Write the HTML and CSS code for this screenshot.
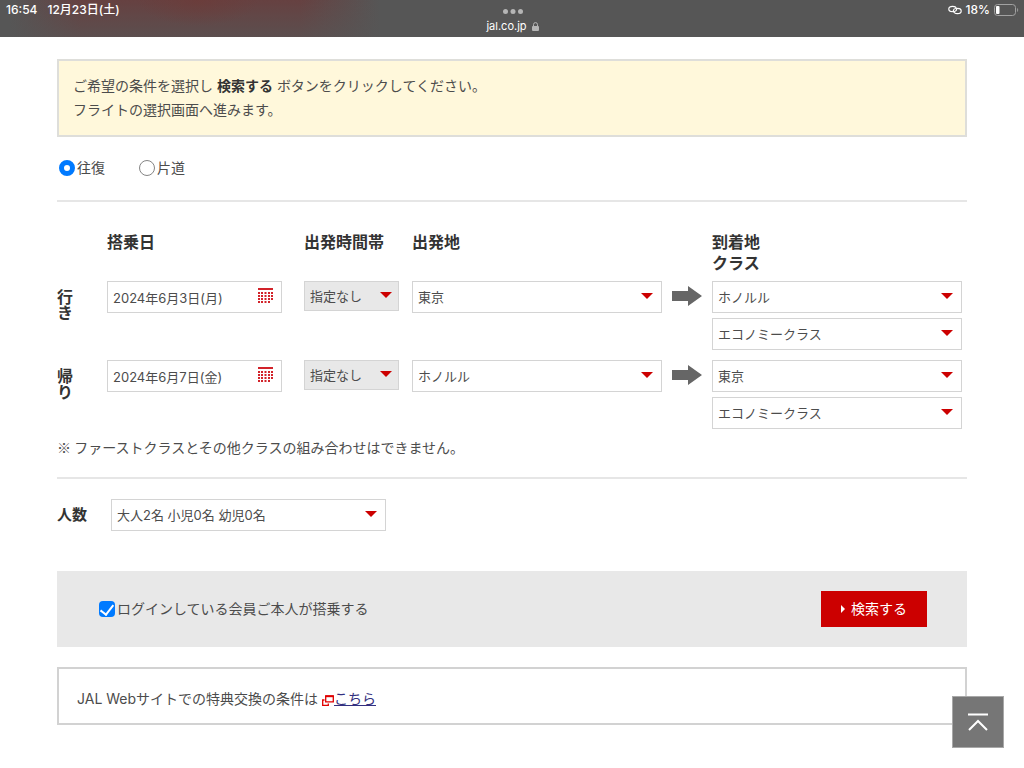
FILE: index.html
```html
<!DOCTYPE html>
<html lang="ja">
<head>
<meta charset="utf-8">
<meta name="viewport" content="width=device-width, initial-scale=1">
<title>JAL 特典航空券 検索</title>
<link rel="stylesheet" href="styles.css">
</head>
<body>
<header class="status">
  <div class="status-left"><span>16:54</span><span>12月23日(土)</span></div>
  <div class="status-center">
    <svg class="dots" viewBox="0 0 20 5" aria-hidden="true"><circle cx="2.5" cy="2.5" r="2.5"/><circle cx="10" cy="2.5" r="2.5"/><circle cx="17.5" cy="2.5" r="2.5"/></svg>
    <div class="address"><span>jal.co.jp</span>
      <svg class="lock" viewBox="0 0 7 9" aria-hidden="true"><path d="M1.5 4.5V2.6a2 2 0 0 1 4 0v1.9" fill="none" stroke="currentColor"/><rect y="4" width="7" height="5" rx="1" fill="currentColor"/></svg>
    </div>
  </div>
  <div class="status-right">
    <svg class="link-icon" viewBox="0 0 14 10" fill="none" stroke="currentColor" stroke-width="1.2" stroke-linecap="round" aria-hidden="true"><path d="M8.6 4.2C8.4 2.4 6.600 1.300 4.500 1.300 2.400 1.300.8 2.400.8 3.900c0 1.600 1.700 2.700 3.700 2.700"/><path d="M5.400 5.800c.2 1.800 2 2.900 4.100 2.900s3.700-1.100 3.700-2.600c0-1.600-1.700-2.700-3.700-2.700"/><path d="M8.600 4.200c0 1.200-.8 2-2 2.300M5.400 5.800c0-1.200.8-2 2-2.300"/></svg>
    <span>18%</span>
    <svg class="battery" viewBox="0 0 25 12" aria-hidden="true"><rect x=".5" y=".5" width="21" height="11" rx="3" fill="none" stroke="#a2a2a2"/><rect x="2" y="2" width="3.5" height="8" rx="1" fill="#fff"/><path d="M23.2 4v4c1.3-.6 1.3-3.4 0-4z" fill="#a2a2a2"/></svg>
  </div>
</header>

<main class="page">
  <p class="notice">ご希望の条件を選択し <strong>検索する</strong> ボタンをクリックしてください。<br>フライトの選択画面へ進みます。</p>

  <form>
    <div class="trip">
      <label class="choice"><input class="radio" type="radio" name="trip" checked>往復</label>
      <label class="choice"><input class="radio" type="radio" name="trip">片道</label>
    </div>

    <div class="flights">
      <span class="head head-date">搭乗日</span>
      <span class="head">出発時間帯</span>
      <span class="head head-from">出発地</span>
      <span class="head head-to">到着地<br>クラス</span>

      <span class="leg">行き</span>
      <div class="date"><input class="field" type="text" value="2024年6月3日(月)" aria-label="行き 搭乗日"><button class="calendar" type="button" aria-label="カレンダー"><svg viewBox="0 0 15 16" aria-hidden="true"><path d="M0 1h15" stroke-width="2"/><path d="M1 4v12M4 4v12M7.500 4v12M11 4v12M14 4v9" stroke-width="2" stroke-dasharray="2 1"/></svg></button></div>
      <div class="pick pick-time"><select class="field field-gray" aria-label="行き 出発時間帯"><option>指定なし</option></select></div>
      <div class="pick"><select class="field" aria-label="行き 出発地"><option>東京</option></select></div>
      <svg class="arrow" viewBox="0 0 30 20" aria-hidden="true"><path d="M0 5h16V0l14 10-14 10v-5H0z"/></svg>
      <div class="stack">
        <div class="pick"><select class="field" aria-label="行き 到着地"><option>ホノルル</option></select></div>
        <div class="pick"><select class="field" aria-label="行き クラス"><option>エコノミークラス</option></select></div>
      </div>

      <span class="leg">帰り</span>
      <div class="date"><input class="field" type="text" value="2024年6月7日(金)" aria-label="帰り 搭乗日"><button class="calendar" type="button" aria-label="カレンダー"><svg viewBox="0 0 15 16" aria-hidden="true"><path d="M0 1h15" stroke-width="2"/><path d="M1 4v12M4 4v12M7.500 4v12M11 4v12M14 4v9" stroke-width="2" stroke-dasharray="2 1"/></svg></button></div>
      <div class="pick pick-time"><select class="field field-gray" aria-label="帰り 出発時間帯"><option>指定なし</option></select></div>
      <div class="pick"><select class="field" aria-label="帰り 出発地"><option>ホノルル</option></select></div>
      <svg class="arrow" viewBox="0 0 30 20" aria-hidden="true"><path d="M0 5h16V0l14 10-14 10v-5H0z"/></svg>
      <div class="stack">
        <div class="pick"><select class="field" aria-label="帰り 到着地"><option>東京</option></select></div>
        <div class="pick"><select class="field" aria-label="帰り クラス"><option>エコノミークラス</option></select></div>
      </div>
    </div>
    <p class="remark">※ ファーストクラスとその他クラスの組み合わせはできません。</p>

    <div class="people">
      <label class="people-label" for="people">人数</label>
      <div class="pick pick-people"><select class="field" id="people"><option>大人2名 小児0名 幼児0名</option></select></div>
    </div>

    <div class="submit">
      <label class="choice"><input class="check" type="checkbox" checked>ログインしている会員ご本人が搭乗する</label>
      <button class="search" type="submit"><svg viewBox="0 0 4 8" aria-hidden="true"><path d="M0 0l4 4-4 4z" fill="#fff"/></svg>検索する</button>
    </div>
  </form>

  <p class="terms">JAL Webサイトでの特典交換の条件は <svg class="window" viewBox="0 0 12 11" aria-hidden="true"><path d="M3.7 1.2h7.6v5.6H3.7z"/><path d="M2.5 5H.7v5.3h5.6V8.5"/><path d="M3.2 1.2h8.6" stroke-width="2"/></svg><a href="#">こちら</a></p>
</main>

<a class="to-top" href="#" aria-label="ページの先頭へ"><svg viewBox="0 0 20 18" aria-hidden="true"><path d="M0 1.5h20M1 17l9-9 9 9"/></svg></a>
</body>
</html>
```
FILE: styles.css
```css
* { box-sizing: border-box; }

body {
  margin: 0;
  background: #fff;
  color: #4c4c4c;
  font: 14px/24px Inter, "Noto Sans CJK JP", sans-serif;
}

.status {
  display: grid;
  grid-template-columns: 1fr auto 1fr;
  height: 37px;
  padding: 0 5px 0 6px;
  color: #fff;
  font-size: 12px;
  font-weight: 500;
  line-height: 20px;
  background:
    radial-gradient(ellipse 60px 26px at 198px 0, rgba(110, 58, 55, 0.6), rgba(110, 58, 55, 0)),
    linear-gradient(to bottom, rgba(86, 86, 86, 0), rgba(86, 86, 86, 0.65)),
    linear-gradient(to right, #565656 10px, #664141 80px, #664141 300px, #565656 380px);
}

.status-left { display: flex; gap: 10px; }

.status-center {
  display: flex;
  flex-direction: column;
  align-items: center;
  gap: 4px;
  padding-top: 9px;
  font-size: 11px;
  font-weight: 400;
  line-height: 16px;
}

.dots { width: 20px; height: 5px; fill: #b5b5b5; }

.address { display: flex; align-items: center; gap: 5px; }

.lock { width: 7px; height: 9px; color: #b5b5b5; }

.status-right {
  display: flex;
  justify-content: flex-end;
  align-items: center;
  gap: 4px;
  height: 20px;
}

.link-icon { width: 14px; height: 10px; }

.battery { width: 25px; height: 12px; }

.page { padding: 22px 57px 40px; }

.notice {
  margin: 0;
  padding: 13px 14px;
  border: 2px solid #dededa;
  background: #fff8db;
}

.notice strong { color: #333; }

.trip {
  display: flex;
  gap: 34px;
  padding: 19px 2px 20px;
  border-bottom: 2px solid #e6e6e6;
}

.choice { display: flex; align-items: center; gap: 2px; }

.radio {
  appearance: none;
  width: 16px;
  height: 16px;
  margin: 0;
  border: 1px solid #858585;
  border-radius: 50%;
  background: #fff;
}

.radio:checked { border: 5px solid #007aff; }

.flights {
  display: grid;
  grid-template-columns: 50px 175px 22px 95px 13px minmax(0, 1fr) 50px minmax(0, 1fr);
  row-gap: 10px;
  align-items: start;
  padding: 30px 5px 0 0;
}

.head {
  margin-bottom: -3px;
  color: #333;
  font-size: 16px;
  font-weight: 700;
  line-height: 21px;
}

.head-date { grid-column: 2 / 4; }
.head-from { grid-column: 6; }
.head-to { grid-column: 8; }

.leg {
  width: 16px;
  padding-top: 8px;
  color: #333;
  font-size: 16px;
  font-weight: 700;
  line-height: 16px;
}

.date, .pick { position: relative; }

.pick-time { grid-column: 4; }
.pick-time + .pick { grid-column: 6; }

.field {
  appearance: none;
  display: block;
  width: 100%;
  height: 32px;
  margin: 0;
  padding: 0 24px 0 5px;
  border: 1px solid #d4d4d4;
  border-radius: 0;
  background: #fff;
  color: #4c4c4c;
  font: inherit;
  font-size: 13px;
}

.field-gray { height: 30px; background: #e8e8e8; }

.pick::after {
  content: "";
  position: absolute;
  top: 12px;
  right: 9px;
  border: 6px solid transparent;
  border-top-color: #c00;
  border-bottom: 0;
  pointer-events: none;
}

.pick-time::after { top: 11px; right: 7px; }

.calendar {
  position: absolute;
  top: 7px;
  right: 9px;
  width: 15px;
  height: 16px;
  padding: 0;
  border: 0;
  background: none;
}

.calendar svg { display: block; fill: none; stroke: #d2232a; }

.arrow {
  justify-self: center;
  width: 30px;
  height: 20px;
  margin-top: 5px;
  fill: #666;
}

.stack { display: grid; gap: 5px; }

.remark {
  margin: 0;
  padding: 6px 0 18px;
  border-bottom: 2px solid #e6e6e6;
  font-family: "Noto Sans CJK JP", sans-serif;
}

.people {
  display: flex;
  align-items: center;
  gap: 24px;
  padding: 20px 0 40px;
}

.people-label { color: #333; font-size: 15px; font-weight: 700; }

.pick-people { width: 275px; }

.submit {
  display: flex;
  justify-content: space-between;
  align-items: center;
  padding: 20px 40px 20px 42px;
  background: #e8e8e8;
}

.check {
  appearance: none;
  display: grid;
  place-content: center;
  width: 16px;
  height: 16px;
  margin: 0;
  border-radius: 4px;
  background: #007aff;
}

.check:checked::before {
  content: "";
  width: 6px;
  height: 11px;
  margin-bottom: 2px;
  border: solid #fff;
  border-width: 0 2px 2px 0;
  transform: rotate(38deg);
}

.search {
  display: flex;
  justify-content: center;
  align-items: center;
  gap: 6px;
  width: 106px;
  height: 36px;
  padding: 0;
  border: 0;
  background: #c00;
  color: #fff;
  font: inherit;
}

.search svg { width: 4px; height: 8px; }

.terms {
  margin: 20px 0 0;
  padding: 18px 18px 12px;
  border: 2px solid #d2d2d2;
}

.terms a { color: #333080; text-decoration: underline; }

.window {
  width: 12px;
  height: 11px;
  vertical-align: -2px;
  fill: none;
  stroke: #e00000;
  stroke-width: 1.3;
}

.to-top {
  position: fixed;
  right: 20px;
  bottom: 20px;
  display: flex;
  justify-content: center;
  align-items: center;
  width: 52px;
  height: 52px;
  border: 1px solid #a8a8a8;
  background: #767676;
}

.to-top svg { width: 20px; height: 18px; fill: none; stroke: #fff; stroke-width: 2; }
```
